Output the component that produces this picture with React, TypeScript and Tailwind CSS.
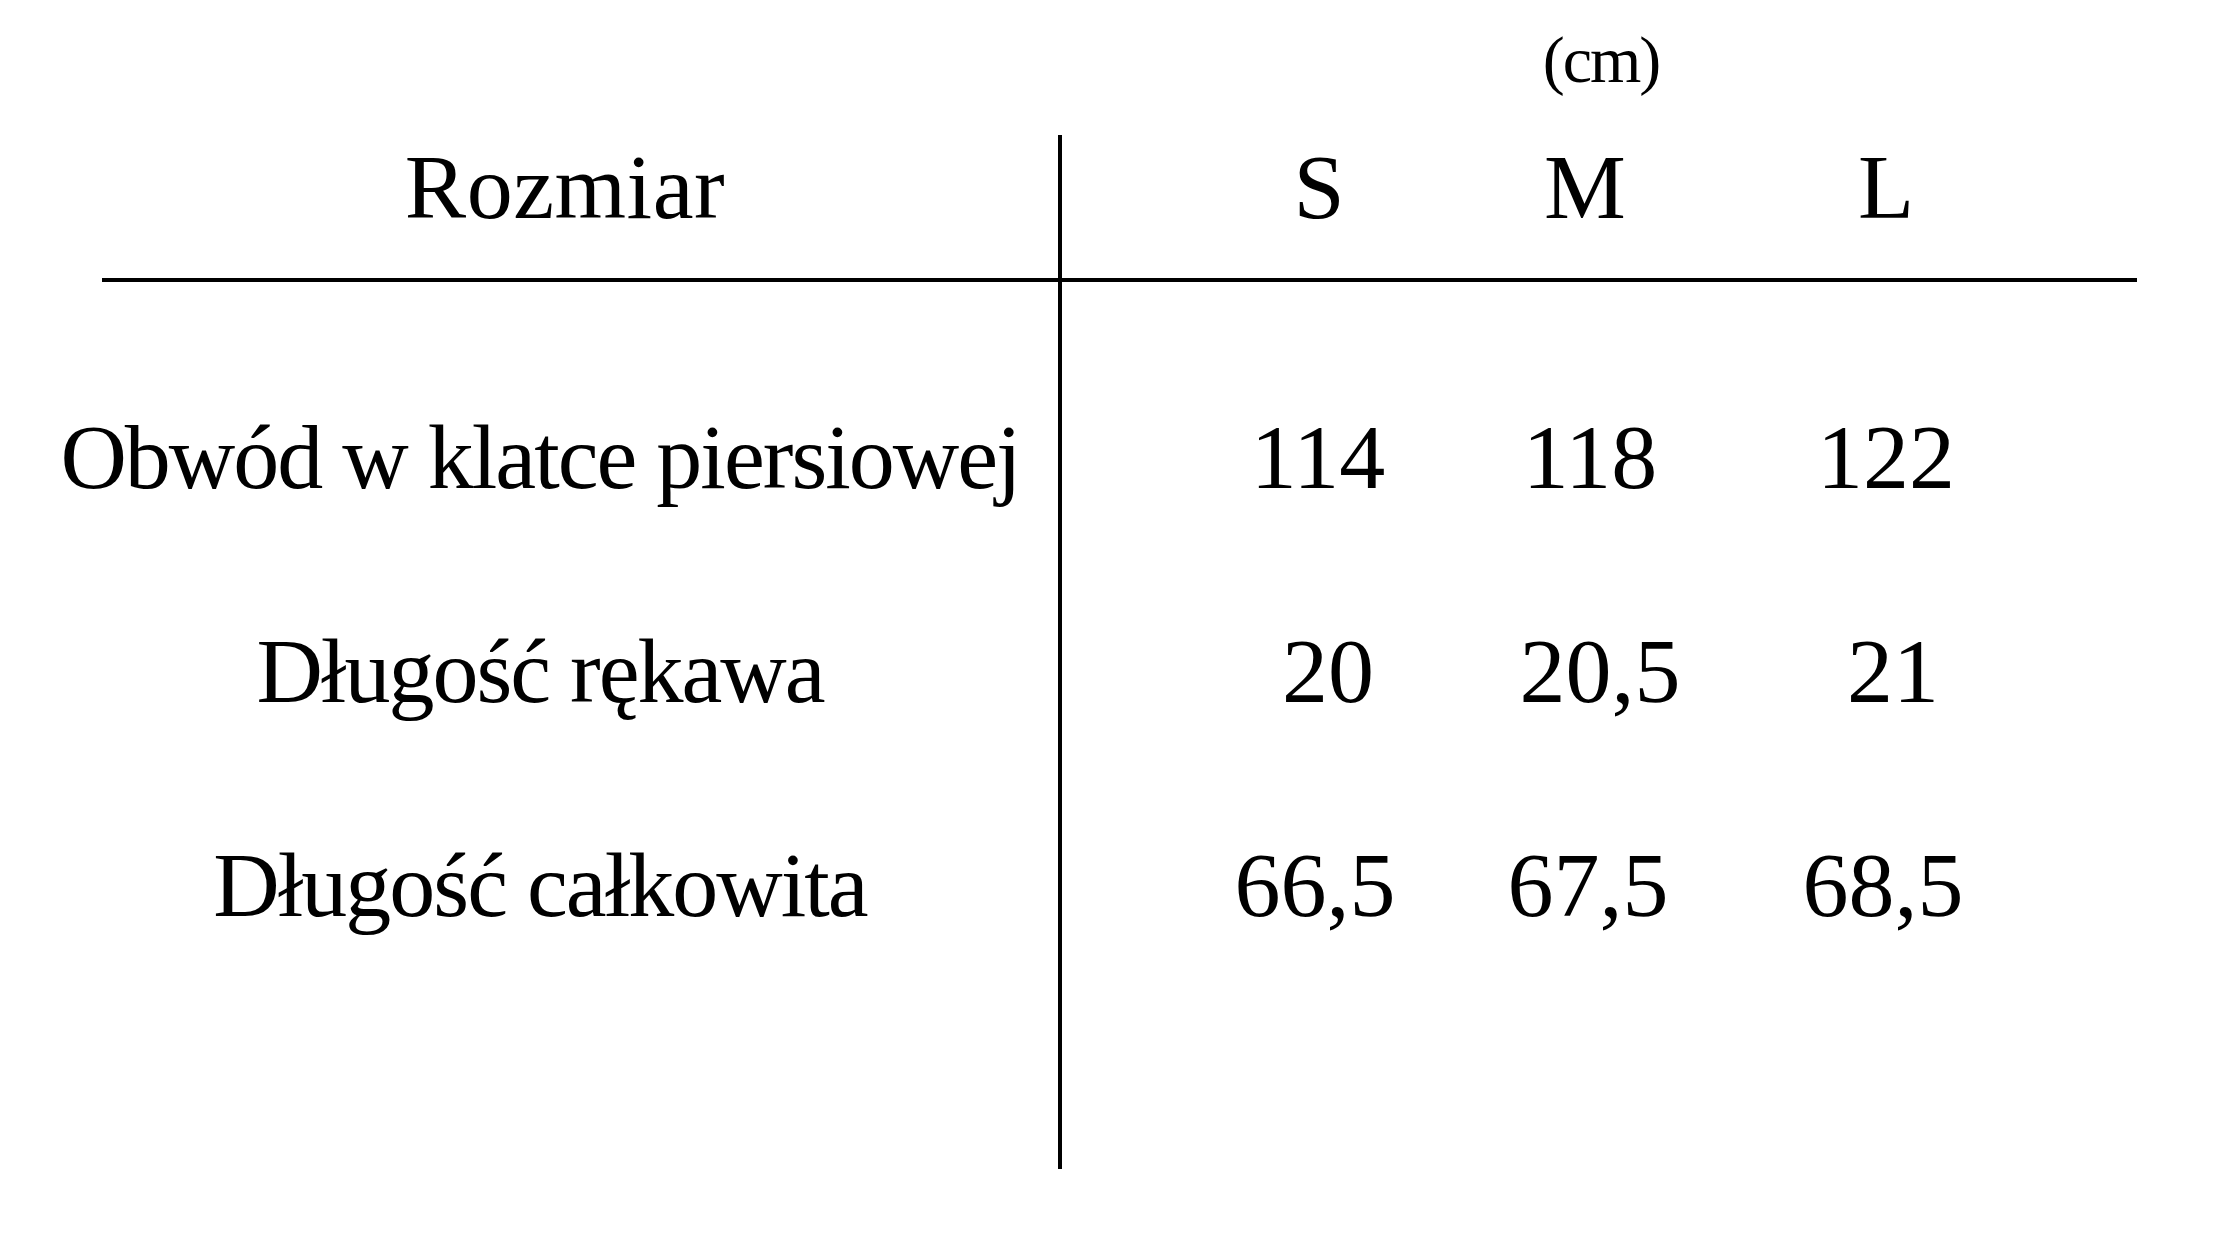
const sizes = [
  { label: "S", nudge: "pr-[6px]" },
  { label: "M", nudge: "pr-[14px]" },
  { label: "L", nudge: "" },
]

const rows = [
  {
    label: "Obwód w klatce piersiowej",
    values: [
      { v: "114", nudge: "pr-[8px]" },
      { v: "118", nudge: "pr-[4px]" },
      { v: "122", nudge: "" },
    ],
    pad: "pt-[129px] pb-[122px]",
  },
  {
    label: "Długość rękawa",
    values: [
      { v: "20", nudge: "pl-[12px]" },
      { v: "20,5", nudge: "pl-[16px]" },
      { v: "21", nudge: "pl-[14px]" },
    ],
    pad: "pb-[122px]",
  },
  {
    label: "Długość całkowita",
    values: [
      { v: "66,5", nudge: "pr-[14px]" },
      { v: "67,5", nudge: "pr-[8px]" },
      { v: "68,5", nudge: "pr-[6px]" },
    ],
    pad: "pb-[238px]",
  },
]

// left offset of each value column inside the right half
const colGap = ["ml-[160px]", "ml-[70px]", "ml-[94px]"]

export default function App() {
  return (
    <div className="w-[2240px] h-[1260px] bg-white text-black font-['Liberation_Serif',serif] overflow-hidden">
      {/* jednostka */}
      <div className="pt-[27px] mb-[42px] flex">
        <div className="ml-[1501px] w-[200px] text-center text-[66px] leading-none tracking-[-2px]">(cm)</div>
      </div>

      <div className="ml-[102px] w-[2035px]">
        {/* nagłówek */}
        <div className="flex border-b-4 border-black">
          <div className="w-[956px] pt-[6px] pb-[45px] pr-[30px] flex justify-center text-[92px] leading-none tracking-[0.5px]">
            <span>Rozmiar</span>
          </div>
          <div className="flex-1 flex border-l-4 border-black pt-[6px] pb-[45px] text-[92px] leading-none">
            {sizes.map((s, i) => (
              <div key={s.label} className={`${colGap[i]} w-[200px] text-center ${s.nudge}`}>
                {s.label}
              </div>
            ))}
          </div>
        </div>

        {/* wiersze */}
        {rows.map((row) => (
          <div key={row.label} className="flex">
            <div className={`w-[956px] pr-[80px] flex justify-center text-[92px] leading-none tracking-[-2px] whitespace-nowrap ${row.pad}`}>
              <span>{row.label}</span>
            </div>
            <div className={`flex-1 flex border-l-4 border-black text-[92px] leading-none ${row.pad}`}>
              {row.values.map((c, i) => (
                <div key={i} className={`${colGap[i]} w-[200px] text-center ${c.nudge}`}>
                  {c.v}
                </div>
              ))}
            </div>
          </div>
        ))}
      </div>
    </div>
  )
}
